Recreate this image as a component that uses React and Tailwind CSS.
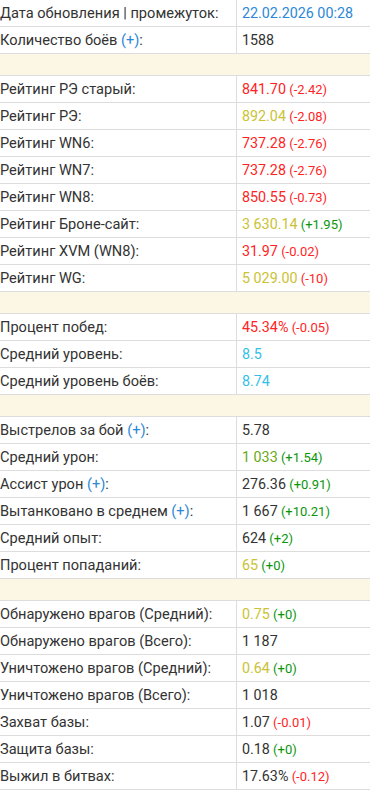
const rows = [
  { l: "Дата обновления | промежуток:", v: "22.02.2026 00:28", vc: "text-[#2b88d8]" },
  { l: "Количество боёв", plus: true, v: "1588" },
  { spacer: true },
  { l: "Рейтинг РЭ старый:", v: "841.70", vc: "text-[#ff2424]", d: "(-2.42)", dc: "text-[#ff2424]" },
  { l: "Рейтинг РЭ:", v: "892.04", vc: "text-[#cbc235]", d: "(-2.08)", dc: "text-[#ff2424]" },
  { l: "Рейтинг WN6:", v: "737.28", vc: "text-[#ff2424]", d: "(-2.76)", dc: "text-[#ff2424]" },
  { l: "Рейтинг WN7:", v: "737.28", vc: "text-[#ff2424]", d: "(-2.76)", dc: "text-[#ff2424]" },
  { l: "Рейтинг WN8:", v: "850.55", vc: "text-[#ff2424]", d: "(-0.73)", dc: "text-[#ff2424]" },
  { l: "Рейтинг Броне-сайт:", v: "3 630.14", vc: "text-[#cbc235]", d: "(+1.95)", dc: "text-[#0a960a]" },
  { l: "Рейтинг XVM (WN8):", v: "31.97", vc: "text-[#ff2424]", d: "(-0.02)", dc: "text-[#ff2424]" },
  { l: "Рейтинг WG:", v: "5 029.00", vc: "text-[#cbc235]", d: "(-10)", dc: "text-[#ff2424]" },
  { spacer: true },
  { l: "Процент побед:", v: "45.34%", vc: "text-[#ff2424]", d: "(-0.05)", dc: "text-[#ff2424]" },
  { l: "Средний уровень:", v: "8.5", vc: "text-[#35bfe8]" },
  { l: "Средний уровень боёв:", v: "8.74", vc: "text-[#35bfe8]" },
  { spacer: true },
  { l: "Выстрелов за бой", plus: true, v: "5.78" },
  { l: "Средний урон:", v: "1 033", vc: "text-[#6aa915]", d: "(+1.54)", dc: "text-[#0a960a]" },
  { l: "Ассист урон", plus: true, v: "276.36", d: "(+0.91)", dc: "text-[#0a960a]" },
  { l: "Вытанковано в среднем", plus: true, v: "1 667", d: "(+10.21)", dc: "text-[#0a960a]" },
  { l: "Средний опыт:", v: "624", d: "(+2)", dc: "text-[#0a960a]" },
  { l: "Процент попаданий:", v: "65", vc: "text-[#cbc235]", d: "(+0)", dc: "text-[#0a960a]" },
  { spacer: true },
  { l: "Обнаружено врагов (Средний):", v: "0.75", vc: "text-[#cbc235]", d: "(+0)", dc: "text-[#0a960a]" },
  { l: "Обнаружено врагов (Всего):", v: "1 187" },
  { l: "Уничтожено врагов (Средний):", v: "0.64", vc: "text-[#cbc235]", d: "(+0)", dc: "text-[#0a960a]" },
  { l: "Уничтожено врагов (Всего):", v: "1 018" },
  { l: "Захват базы:", v: "1.07", d: "(-0.01)", dc: "text-[#ff2424]" },
  { l: "Защита базы:", v: "0.18", d: "(+0)", dc: "text-[#0a960a]" },
  { l: "Выжил в битвах:", v: "17.63%", d: "(-0.12)", dc: "text-[#ff2424]" },
];

const App = () => {
  return (
    <div className="w-[370px] min-h-screen bg-white text-[#333] text-[14px] font-['Roboto',sans-serif]">
      {rows.map((r, i) =>
        r.spacer ? (
          <div key={i} className="h-[22px] bg-[#fcf6e4] border-b border-[#ddd]" />
        ) : (
          <div key={i} className="flex h-[27px] border-b border-[#ddd] leading-[26px]">
            <div className="w-[237px] shrink-0 border-r border-[#ddd] whitespace-nowrap text-[14.6px]">
              {r.l}
              {r.plus && (
                <>
                  {" "}
                  <span className="text-[#2b88d8]">(+)</span>:
                </>
              )}
            </div>
            <div className="pl-[5px] whitespace-nowrap text-[14.3px]">
              <span className={r.vc || ""}>{r.v}</span>
              {r.d && <span className={`text-[13px] ${r.dc}`}> {r.d}</span>}
            </div>
          </div>
        )
      )}
    </div>
  );
};

export default App;
